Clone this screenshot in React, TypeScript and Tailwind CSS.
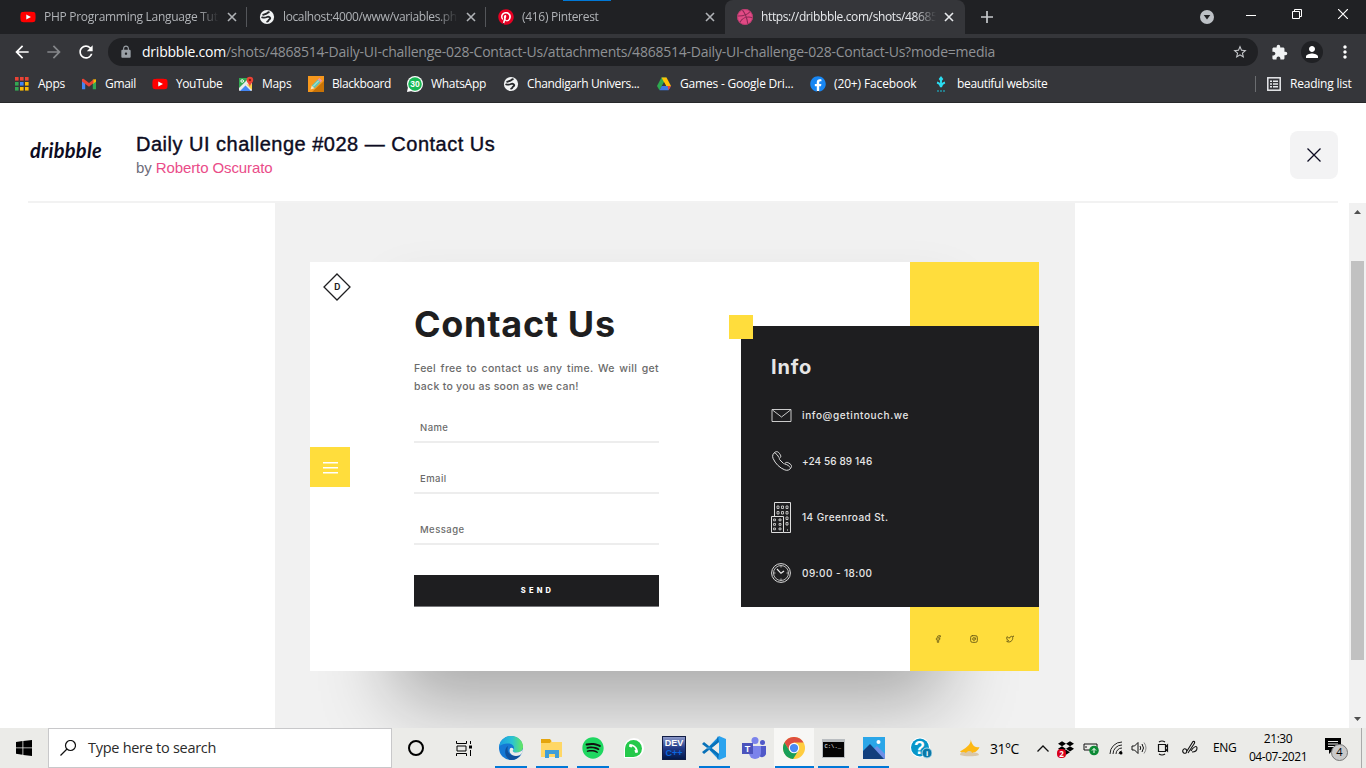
import React from "react";
import type { ReactNode } from "react";
import { Facebook, Instagram, Twitter } from "lucide-react";
import { FaPinterest, FaYoutube, FaPhoneAlt, FaSpotify, FaDropbox, FaFacebook } from "react-icons/fa";
import { MdArrowBack, MdArrowForward, MdExtension, MdLock, MdPerson, MdRefresh, MdStarBorder, MdMoreVert } from "react-icons/md";

const YouTube = () => (
  <span className="relative flex">
    <FaYoutube className="h-[18px] w-4 text-[#f00]" />
    <svg viewBox="0 0 6 6" className="absolute left-[6px] top-[6px] h-[6px] w-[5px]"><path d="M0.3 0L6 3 0.3 6z" fill="#fff" /></svg>
  </span>
);

const Globe = () => (
  <svg viewBox="0 0 16 16" className="h-4 w-4">
    <circle cx="8" cy="8" r="7.1" fill="#f1f3f4" />
    <path d="M9.800 3.200C8.500 3.200 8.600 4.600 7.200 4.700 5.800 4.800 5.500 5.800 4.200 5.800M3.200 8.400c2 .5 3.800.1 4.800-.4 1.300-.6 2.900-.1 3.200.9.300 1.100-1.200 1.200-1.500 2.200-.2.800-.6 1.400-1.500 1.500" fill="none" stroke="#26282b" strokeWidth="1.900" strokeLinecap="round" />
  </svg>
);

const DribbbleBall = () => (
  <svg viewBox="0 0 16 16" className="h-4 w-4">
    <circle cx="8" cy="8" r="7.900" fill="#e24a85" />
    <path d="M5.300.800C8 4 10 8.500 10.800 15M.500 7c5 .2 9.500-.8 12.700-4.500M2.800 13.500C5 9 10 7.200 15.500 8.700" fill="none" stroke="#8a2a55" strokeWidth="1.100" />
    <circle cx="8" cy="8" r="7.500" fill="none" stroke="#b23a6c" strokeWidth=".8" />
  </svg>
);

const AppsGrid = () => (
  <svg viewBox="0 0 14 14" className="h-[14px] w-[14px]">
    {["#ea4335", "#ea4335", "#ea4335", "#34a853", "#4285f4", "#fbbc04", "#34a853", "#fbbc04", "#fbbc04"].map((c, i) => (
      <rect key={i} x={(i % 3) * 5} y={Math.floor(i / 3) * 5} width="3.600" height="3.600" fill={c} />
    ))}
  </svg>
);

const Gmail = () => (
  <svg viewBox="0 0 16 16" className="h-4 w-4">
    <path d="M1 4.500v8.800h3.200V7z" fill="#4285f4" />
    <path d="M15 4.500v8.800h-3.200V7z" fill="#34a853" />
    <path d="M11.800 3.600L15 3.200v2.600L11.800 8z" fill="#fbbc04" />
    <path d="M1 3l1.500-.3L8 7l4.500-3.600V7L8 10.800 1 5.600z" fill="#ea4335" />
  </svg>
);

const Maps = () => (
  <svg viewBox="0 0 16 16" className="h-4 w-4">
    <rect x="1" y="2" width="13" height="13" rx="1" fill="#e8eaed" />
    <path d="M1 2h10L1 12z" fill="#34a853" />
    <path d="M2 15l5.500-5.500L13 15z" fill="#4285f4" />
    <path d="M8.500 8.500L14 14V8z" fill="#fbd04a" />
    <circle cx="4.200" cy="5" r="1.300" fill="none" stroke="#fff" />
    <path d="M8.600 4a3.300 3.300 0 016.600 0c0 2.500-2.700 3.500-3.300 7-.6-3.500-3.300-4.500-3.300-7z" fill="#ea4335" />
    <circle cx="11.900" cy="4" r="1.200" fill="#8c1a12" />
  </svg>
);

const Pencil = () => (
  <svg viewBox="0 0 16 16" className="h-4 w-4">
    <rect width="16" height="16" fill="#f7981d" />
    <path d="M16 5v11H4z" fill="#c97306" />
    <path d="M2.500 13.500l1.300-4 2.800 2.800z" fill="#f6e7bd" />
    <path d="M3.800 9.500l6-6 2.800 2.800-6 6z" fill="#63c5b5" />
    <path d="M5 10.500l6-6" stroke="#c8f0df" strokeWidth="1" />
    <path d="M9.800 3.500l1.600-1.600 2.800 2.800-1.600 1.600z" fill="#e995a7" />
  </svg>
);

const WhatsThirty = () => (
  <svg viewBox="0 0 16 16" className="h-4 w-4">
    <circle cx="8" cy="8" r="8" fill="#fff" />
    <path d="M0 16l1-5 4 4z" fill="#fff" />
    <circle cx="8" cy="8" r="6.800" fill="#19b955" />
    <text x="8" y="11" textAnchor="middle" fontSize="8.500" fontWeight="700" fontFamily="Liberation Sans, sans-serif" fill="#fff">30</text>
  </svg>
);

const Drive = () => (
  <svg viewBox="0 0 16 16" className="h-4 w-4">
    <path d="M5.500 1.500h5L8 6.500 3.500 14.300 1 10z" fill="#2da94f" />
    <path d="M5.500 1.500h5L15 10h-5z" fill="#ffc107" />
    <path d="M3.500 14.300L5.800 10H15l-2.500 4.300z" fill="#3b78e7" />
    <path d="M11.500 10H15l-2.500 4.300z" fill="#e8453c" />
    <path d="M8 6.200L10.200 10H5.800z" fill="#35363a" />
  </svg>
);

const FacebookRound = () => (
  <span className="flex h-4 w-4 rounded-full bg-[radial-gradient(#fff_58%,transparent_62%)]"><FaFacebook className="h-4 w-4 text-[#1886f2]" /></span>
);

const Arrow = () => (
  <svg viewBox="0 0 16 16" className="h-4 w-4">
    <path d="M8 0l2.300 3L8 6 5.700 3z" fill="#2bdcf0" />
    <path d="M8 3v7M4 6.500c2 .5 3.500 2 4 4.500.5-2.500 2-4 4-4.500" stroke="#2bdcf0" strokeWidth="1.900" fill="none" />
    <path d="M4 15h2M7 15h2M10 15h2" stroke="#2395a5" strokeWidth="1.500" />
  </svg>
);

const Cross = ({ className }: { className: string }) => (
  <svg viewBox="0 0 10 10" className={className}><path d="M1 1l8 8M9 1L1 9" stroke="currentColor" strokeWidth="1.600" /></svg>
);

const Tab = ({ icon, title, text, active, divider }: { icon: ReactNode; title: string; text: string; active?: boolean; divider?: boolean }) => (
  <div className={`flex h-[34px] shrink-0 items-center ${active ? "w-[240px] rounded-t-lg bg-[#35363a] text-[#e8eaed]" : "w-[239px] text-[#b0b3b7]"}`}>
    <span className="ml-3 flex w-4 shrink-0 justify-center">{icon}</span>
    <span className="ml-2 w-[175px] whitespace-nowrap [mask-image:linear-gradient(to_right,#000_88%,transparent)]">
      <span className={text}>{title}</span>
    </span>
    <Cross className="ml-2 h-[10px] w-[10px] shrink-0" />
    {divider && <span className="ml-auto h-5 w-px bg-[#54565a]" />}
  </div>
);

const marks: { icon: ReactNode; label: string; box: string; text: string }[] = [
  { icon: <AppsGrid />, label: "Apps", box: "w-[67px]", text: "tracking-[-0.25px]" },
  { icon: <Gmail />, label: "Gmail", box: "w-[71px]", text: "tracking-[-0.3px]" },
  { icon: <YouTube />, label: "YouTube", box: "w-[86px]", text: "tracking-[-0.45px]" },
  { icon: <Maps />, label: "Maps", box: "w-[70px]", text: "tracking-[-0.3px]" },
  { icon: <Pencil />, label: "Blackboard", box: "w-[99px]", text: "tracking-[-0.4px]" },
  { icon: <WhatsThirty />, label: "WhatsApp", box: "w-[96px]", text: "tracking-[-0.3px]" },
  { icon: <Globe />, label: "Chandigarh Univers...", box: "w-[153px]", text: "tracking-[-0.36px]" },
  { icon: <Drive />, label: "Games - Google Dri...", box: "w-[154px]", text: "tracking-[-0.2px]" },
  { icon: <FacebookRound />, label: "(20+) Facebook", box: "w-[123px]", text: "tracking-[-0.13px]" },
  { icon: <Arrow />, label: "beautiful website", box: "w-[130px]", text: "tracking-[-0.34px]" },
];

const Browser = () => (
  <header className="h-[103px] w-full border-b border-[#27282a] bg-[#35363a] text-[12px] text-white">
    <div className="relative flex h-[34px] items-center bg-[#202124] pl-2">
      <span className="absolute left-[563px] top-0 h-px w-12 bg-[#0078d7]" />
      <Tab icon={<YouTube />} title="PHP Programming Language Tut" text="tracking-[-0.28px]" divider />
      <Tab icon={<Globe />} title="localhost:4000/www/variables.ph" text="tracking-[-0.38px]" divider />
      <Tab icon={<span className="flex rounded-full bg-[radial-gradient(#fff_58%,transparent_62%)]"><FaPinterest className="h-4 w-4 text-[#e60023]" /></span>} title="(416) Pinterest" text="tracking-[-0.3px]" />
      <Tab icon={<DribbbleBall />} title="https://dribbble.com/shots/48685" text="tracking-[-0.38px]" active />
      <svg viewBox="0 0 12 12" className="ml-4 h-3 w-3"><path d="M6 0v12M0 6h12" stroke="#c6c9cc" strokeWidth="1.700" /></svg>
      <div className="ml-auto flex items-center">
        <svg viewBox="0 0 14 14" className="mr-8 h-[14px] w-[14px]"><circle cx="7" cy="7" r="7" fill="#bdc1c6" /><path d="M3.700 5h6.600L7 9.500z" fill="#202124" /></svg>
        <span className="mb-1 mr-9 h-px w-[10px] bg-white" />
        <svg viewBox="0 0 10 10" className="mb-[6px] mr-9 h-[10px] w-[10px]"><path d="M.5 2.500h7v7h-7zM2.500 2.500v-2h7v7h-2" fill="none" stroke="#fff" /></svg>
        <svg viewBox="0 0 10 10" className="mb-[6px] mr-[18px] h-[10px] w-[10px]"><path d="M0 0l10 10M10 0L0 10" stroke="#fff" strokeWidth="1.200" /></svg>
      </div>
    </div>
    <div className="flex h-9 items-center">
      <MdArrowBack className="ml-[12px] h-5 w-5" />
      <MdArrowForward className="ml-3 h-5 w-5 text-[#85878a]" />
      <MdRefresh className="ml-3 h-5 w-5" />
      <div className="ml-3 flex h-7 w-[1150px] items-center rounded-full bg-[#202124]">
        <MdLock className="ml-[11px] h-[14px] w-[14px] text-[#9aa0a6]" />
        <span className="ml-[9px] whitespace-nowrap text-[14px] leading-7 tracking-[-0.23px] text-[#8f9195]"><span className="text-white">dribbble.com</span>/shots/4868514-Daily-UI-challenge-028-Contact-Us/attachments/4868514-Daily-UI-challenge-028-Contact-Us?mode=media</span>
        <MdStarBorder className="ml-auto mr-[10px] h-4 w-4 text-[#c8cacd]" />
      </div>
      <MdExtension className="ml-[13px] h-[17px] w-[17px] text-[#f1f3f4]" />
      <span className="ml-[13px] flex h-[22px] w-[22px] items-center justify-center rounded-full bg-[#202124]"><MdPerson className="h-[18px] w-[18px]" /></span>
      <MdMoreVert className="ml-[12px] h-5 w-5" />
    </div>
    <div className="flex h-[28px] items-center pl-[14px]">
      {marks.map((m) => (
        <div key={m.label} className={`flex shrink-0 items-center ${m.box}`}>
          <span className="flex w-4 shrink-0 justify-center">{m.icon}</span>
          <span className={`ml-2 whitespace-nowrap ${m.text}`}>{m.label}</span>
        </div>
      ))}
      <span className="ml-[192px] h-4 w-px bg-[#6b6d70]" />
      <svg viewBox="0 0 14 14" className="ml-[11px] h-[14px] w-[14px]"><rect x=".8" y=".8" width="12.400" height="12.400" fill="none" stroke="#e8eaed" strokeWidth="1.500" /><path d="M3 4.200h2M6 4.200h5M3 7h2M6 7h5M3 9.800h2M6 9.800h5" stroke="#e8eaed" strokeWidth="1.500" /></svg>
      <span className="ml-[9px] whitespace-nowrap tracking-[-0.22px]">Reading list</span>
    </div>
  </header>
);

const Field = ({ label, space }: { label: string; space: string }) => (
  <div className={`h-[28px] border-b-2 border-[#ededed] pl-[6px] text-[9.5px] font-medium leading-[26px] tracking-[0.45px] text-[#6b6b6b] ${space}`}>{label}</div>
);

const Envelope = () => (
  <svg viewBox="0 0 20 13" className="h-[13px] w-[21px]"><path d="M.5.5h19v12H.5zM1 1l9 7 9-7" fill="none" stroke="#dedede" strokeWidth=".9" /></svg>
);
const Handset = () => (
  <svg viewBox="0 0 20 20" className="h-5 w-5 translate-x-px"><path d="M3.300 1C5 .2 6.200.8 7.300 2.300l1 1.500c.9 1.500.5 2.500-.6 3.300-.7.6-.5 1 .1 1.700l3.600 3.600c.6.6 1 .7 1.600 0 .8-1 2-1.400 3.300-.6l1.700 1.100c1.500 1 1.900 2.300 1.100 3.700-1.300 2.400-3.700 3.300-6.300 2.300C7.800 17 3.300 12.600 1 7.300 0 4.600 1 2.400 3.300 1zM2.700 2.200c1.300-.2 3.300 2.400 4.300 4.500M13 13c2.500.8 4.400 2 5.200 3.600" fill="none" stroke="#dedede" strokeWidth="1" /></svg>
);
const Building = () => (
  <svg viewBox="0 0 20 31" className="h-[31px] w-5">
    <path d="M.5 14.500h12v16H.5zM3.500 14.500V.5h16v30h-7" fill="none" stroke="#dedede" />
    <path d="M6 4h2v2.500H6zM10.500 4h2v2.500h-2zM15 4h2v2.500h-2zM6 9.500h2v2.500H6zM10.500 9.500h2v2.500h-2zM15 9.500h2v2.500h-2zM15 15h2v2.500h-2zM15 20.500h2V23h-2zM2.500 17h2v1.800h-2zM8 17h2v1.800H8zM2.500 21.500h2v1.800h-2zM8 21.500h2v1.800H8zM2.500 26h2v1.800h-2zM8 26h2v1.800H8z" fill="none" stroke="#dedede" strokeWidth=".8" />
    <path d="M16.500 27v2" stroke="#888" />
  </svg>
);
const Clock = () => (
  <svg viewBox="0 0 20 20" className="h-5 w-5"><circle cx="10" cy="10" r="9.400" fill="none" stroke="#dedede" /><circle cx="10" cy="10" r="7.500" fill="none" stroke="#dedede" strokeWidth=".8" /><path d="M10 2.500v2M10 15.500v2M2.500 10h2M15.500 10h2" stroke="#dedede" strokeWidth=".8" /><path d="M6 6l4 4.300L13 8" fill="none" stroke="#eee" strokeWidth="1.200" /></svg>
);

const InfoRow = ({ icon, label, space, text }: { icon: ReactNode; label: string; space: string; text: string }) => (
  <div className={`flex h-10 items-center ${space}`}>
    <span className="flex w-[21px] shrink-0">{icon}</span>
    <span className={`ml-[10px] whitespace-nowrap text-[10px] font-medium text-[#e6e6e6] ${text}`}>{label}</span>
  </div>
);

const Shot = () => (
  <div className="flex h-[409px] w-[729px] bg-white font-['Inter',sans-serif] text-[#1e1e20] shadow-[-6px_122px_70px_-90px_rgba(0,0,0,0.3),0_-60px_50px_-82px_rgba(0,0,0,0.09)]">
    <div className="w-[104px] shrink-0 pt-[11px]">
      <svg viewBox="0 0 28 28" className="ml-[13px] h-7 w-7">
        <path d="M14 1l13 13-13 13L1 14z" fill="none" stroke="#1e1e20" strokeWidth="1.300" />
        <text x="14.400" y="17" textAnchor="middle" fontSize="8.500" fontWeight="700" fontFamily="Inter, sans-serif" fill="#1e1e20">D</text>
      </svg>
      <div className="mt-[146px] flex h-10 w-10 items-center justify-center bg-[#ffdd3c]">
        <svg viewBox="0 0 15 13" className="h-[13px] w-[15px]"><path d="M0 1.700h15M0 6.700h15M0 11.700h15" stroke="#fff" strokeWidth="1.400" /></svg>
      </div>
    </div>
    <div className="w-[245px] shrink-0 pt-[41px]">
      <h1 className="h-[43px] whitespace-nowrap text-[36px] font-bold leading-[43px] tracking-[0.7px]">Contact Us</h1>
      <div className="mt-[14px] whitespace-nowrap text-[10.5px] font-medium leading-[18px] text-[#6b6b6b]">
        <p className="tracking-[0.32px] [word-spacing:1.4px]">Feel free to contact us any time. We will get</p>
        <p className="tracking-[0.27px]">back to you as soon as we can!</p>
      </div>
      <Field label="Name" space="mt-[19px]" />
      <Field label="Email" space="mt-[23px]" />
      <Field label="Message" space="mt-[23px]" />
      <button className="mt-[30px] block h-[32px] w-full border-b border-[#77777a] bg-[#1e1e20] pl-[2px] pt-px text-center text-[7.5px] font-extrabold tracking-[3.2px] text-white">SEND</button>
    </div>
    <div className="ml-[82px] flex w-[298px] flex-col items-end">
      <div className="h-16 w-[129px] bg-[#ffdd3c]" />
      <section className="relative h-[281px] w-full bg-[#1e1e20] pl-[30px] pt-[31px]">
        <span className="absolute -left-3 -top-[11px] h-6 w-6 bg-[#ffdd3c]" />
        <h2 className="text-[20px] font-bold leading-5 tracking-[0.8px] text-[#e6e6e6]">Info</h2>
        <InfoRow icon={<Envelope />} label="info@getintouch.we" space="mt-[18px]" text="tracking-[0.61px]" />
        <InfoRow icon={<Handset />} label="+24 56 89 146" space="mt-[6px]" text="tracking-[0.1px]" />
        <InfoRow icon={<Building />} label="14 Greenroad St." space="mt-4" text="tracking-[0.43px]" />
        <InfoRow icon={<Clock />} label="09:00 - 18:00" space="mt-4" text="tracking-[0.42px]" />
      </section>
      <div className="flex h-16 w-[129px] items-center justify-between bg-[#ffdd3c] pl-6 pr-[25px] text-[#6c5d17]">
        <Facebook className="h-2 w-2" strokeWidth={2.500} /><Instagram className="h-2 w-2" strokeWidth={2.800} /><Twitter className="h-2 w-2" strokeWidth={2.800} />
      </div>
    </div>
  </div>
);

const Page = () => (
  <main className="flex h-[625px] flex-col bg-white">
    <div className="mx-7 flex h-[100px] shrink-0 border-b-2 border-[#f2f2f2] font-['Liberation_Sans',sans-serif]">
      <div className="w-[108px] shrink-0 pl-[2px] pt-[35px] font-['Lato',sans-serif] text-[20px] font-bold italic leading-6 tracking-[0.3px] text-[#0d0c22]">dribbble</div>
      <div className="pt-[28px]">
        <h1 className="whitespace-nowrap text-[20px] leading-[26px] tracking-[0.5px] text-[#0d0c22] [-webkit-text-stroke:0.4px_#0d0c22]">Daily UI challenge #028 — Contact Us</h1>
        <p className="text-[15px] leading-[22px] tracking-[-0.1px] text-[#6e6d7a]">by <span className="text-[#ea4c89]">Roberto Oscurato</span></p>
      </div>
      <button className="ml-auto mt-7 flex h-12 w-12 items-center justify-center rounded-lg bg-[#f3f3f4]">
        <svg viewBox="0 0 14 14" className="h-[14px] w-[14px]"><path d="M.5.5l13 13M13.500.5l-13 13" stroke="#0d0c22" strokeWidth="1.300" /></svg>
      </button>
    </div>
    <div className="flex h-[525px]">
      <div className="ml-[275px] w-[800px] shrink-0 overflow-hidden bg-[#f1f1f1] pl-[35px] pt-[59px]"><Shot /></div>
      <div className="ml-auto flex w-[17px] flex-col items-center bg-[#f1f1f1] pt-[7px]">
        <svg viewBox="0 0 7 4" className="h-1 w-[7px]"><path d="M0 4l3.500-4L7 4z" fill="#505050" /></svg>
        <span className="mt-[47px] h-[399px] w-[13px] bg-[#c1c1c1]" />
        <svg viewBox="0 0 7 4" className="mt-[57px] h-1 w-[7px]"><path d="M0 0l3.500 4L7 0z" fill="#505050" /></svg>
      </div>
    </div>
  </main>
);

const Edge = () => (
  <svg viewBox="0 0 24 24" className="h-6 w-6">
    <defs><linearGradient id="eg" x1="0" x2="1"><stop offset="0" stopColor="#1b9de2" /><stop offset=".55" stopColor="#2bc3d2" /><stop offset="1" stopColor="#66e85c" /></linearGradient></defs>
    <circle cx="12" cy="12" r="12" fill="#1578d4" />
    <path d="M0 11C1 4 6 0 12 0c7 0 12 5 12 10.500 0 4-3 6-7 6-3 0-4-1.500-2.500-3 1.800-2.200-1-6-5-6C5 7.500 1 9 0 11z" fill="url(#eg)" />
    <path d="M9 10c-2 6 2 11 11 9.200l2-1C20 22 16.500 24 12 24 6 23 4 13 9 10z" fill="#10519d" />
    <path d="M14.500 13.500c-1.500 1.500-.5 3 2.500 3 3.500 0 6-1.200 7-3.500l-.5 3.500c-1.500 2.500-4 3.500-6.500 3.500-5 0-7.500-4-6-7.500.8-1.500 3.500-.8 3.500 1z" fill="#ecedea" />
  </svg>
);
const Folder = () => (
  <svg viewBox="0 0 22 19" className="h-[19px] w-[22px]"><path d="M0 1h9l2 2h10v15H0z" fill="#ffd765" /><path d="M0 0h9l1.500 2L9 4H0z" fill="#e5a50d" /><path d="M4 19v-8h14v8h-4v-4H8v4z" fill="#3f9ed8" /></svg>
);
const Spotify = () => <span className="flex rounded-full bg-[radial-gradient(#111_58%,transparent_62%)]"><FaSpotify className="h-[22px] w-[22px] text-[#1ed760]" /></span>;
const WhatsAppIcon = () => (
  <span className="flex h-5 w-5 items-center justify-center rounded-full rounded-bl-sm bg-white"><span className="flex h-[17px] w-[17px] items-center justify-center rounded-full rounded-bl-sm bg-[#25c94b]"><FaPhoneAlt className="h-[9px] w-[9px] rotate-90 -scale-x-100 rotate-[270deg] text-white" /></span></span>
);
const DevCpp = () => (
  <span className="flex h-6 w-6 flex-col items-center overflow-hidden border border-[#101c44] bg-linear-to-b from-[#8c98c8] via-[#233a87] to-[#03194b] pt-px font-['Liberation_Sans',sans-serif] text-[9px] font-bold leading-[10px]">
    <span className="text-white">DEV</span><span className="text-[#0b68e0]">C++</span>
  </span>
);
const Code = () => (
  <svg viewBox="0 0 24 24" className="h-6 w-6"><path d="M17 0v24l7-3V3z" fill="#2ba3ee" /><path d="M17 0L5.500 12 17 24v-6L9.500 12 17 6z" fill="#1b8ddb" /><path d="M2 6L0 8l15 11.500V24l2-6zM2 18l-2-2L15 4.500V0l2 6z" fill="#0871b8" /></svg>
);
const Teams = () => (
  <svg viewBox="0 0 24 22" className="h-[22px] w-6"><circle cx="20.500" cy="5.500" r="2.500" fill="#5059c9" /><circle cx="13" cy="3.500" r="3.500" fill="#7b83eb" /><path d="M16 9h8v6a4 4 0 01-8 2z" fill="#5059c9" /><path d="M7 9h12v7a6 6 0 01-12 0z" fill="#7b83eb" /><path d="M0 6h11v11H0z" fill="#4b53bc" /><text x="5.500" y="14.500" textAnchor="middle" fontSize="9" fontWeight="700" fontFamily="Liberation Sans, sans-serif" fill="#fff">T</text></svg>
);
const Chrome = () => (
  <svg viewBox="0 0 24 24" className="h-[22px] w-[22px]"><circle cx="12" cy="12" r="12" fill="#ffcd40" /><path d="M1.600 6A12 12 0 0122.400 6H12L7 15z" fill="#de4f41" /><path d="M1.600 6A12 12 0 0011 24l6-9.500-5 2.500-5-2z" fill="#199f59" /><circle cx="12" cy="12" r="5.700" fill="#fff" /><circle cx="12" cy="12" r="4.500" fill="#4a8af4" /></svg>
);
const Terminal = () => (
  <svg viewBox="0 0 23 19" className="h-[19px] w-[23px]"><rect width="23" height="19" fill="#b9bdc0" /><rect x="1" y="3" width="21" height="15" fill="#050505" /><text x="2.500" y="9" fontSize="5.500" fontFamily="Liberation Mono, monospace" fill="#fff">C:\._</text></svg>
);
const Photos = () => (
  <svg viewBox="0 0 22 22" className="h-[22px] w-[22px]"><rect width="22" height="22" fill="#2aa6e8" /><path d="M8 14l6-5 8 8v5H0z" fill="#6f8fe6" /><path d="M0 14l7-7 14 15H0z" fill="#123f7d" /><circle cx="15.500" cy="5" r="2" fill="#fff" /></svg>
);
const Help = () => (
  <svg viewBox="0 0 22 22" className="h-[22px] w-[22px]"><circle cx="10" cy="10.500" r="10" fill="#fff" /><circle cx="10" cy="10.500" r="9" fill="#0796c9" /><text x="9.500" y="17" textAnchor="middle" fontSize="18" fontWeight="700" fontFamily="Liberation Sans, sans-serif" fill="#fff">?</text><circle cx="17" cy="16" r="5" fill="#0b78a8" stroke="#a9d7e8" /><text x="17" y="19" textAnchor="middle" fontSize="8" fontWeight="700" fontFamily="Liberation Sans, sans-serif" fill="#fff">i</text></svg>
);

const tasks: { icon: ReactNode; box: string; bar?: string }[] = [
  { icon: <Edge />, box: "w-[41px]", bar: "w-8" },
  { icon: <Folder />, box: "w-[41px]", bar: "w-8" },
  { icon: <Spotify />, box: "w-[41px]", bar: "w-8" },
  { icon: <WhatsAppIcon />, box: "w-[41px]" },
  { icon: <DevCpp />, box: "w-10" },
  { icon: <Code />, box: "w-10", bar: "w-[31px]" },
  { icon: <Teams />, box: "w-10" },
  { icon: <Chrome />, box: "w-10 bg-[#f7f7f5]", bar: "w-[39px]" },
  { icon: <Terminal />, box: "w-[39px]", bar: "w-[31px]" },
  { icon: <Photos />, box: "w-[41px]", bar: "w-[31px]" },
];

const Slot = ({ w, children }: { w: string; children: ReactNode }) => <span className={`flex shrink-0 justify-center ${w}`}>{children}</span>;

const Taskbar = () => (
  <footer className="flex h-10 items-center bg-[#ebebe8] text-[12px] text-black">
    <Slot w="w-12"><svg viewBox="0 0 16 16" className="h-4 w-4"><path d="M0 2l6.500-.9v6.400H0zM7.300 1L16 0v7.500H7.300zM0 8.300h6.500v6.400L0 13.800zM7.300 8.300H16V16l-8.700-1.100z" /></svg></Slot>
    <div className="flex h-10 w-[344px] items-center border border-[#c8c8ca] bg-white pl-[11px]">
      <svg viewBox="0 0 16 16" className="h-4 w-4"><circle cx="10.500" cy="5.500" r="5" fill="none" stroke="#111" strokeWidth="1.200" /><path d="M7 9L.5 15.500" stroke="#111" strokeWidth="1.200" /></svg>
      <span className="ml-3 whitespace-nowrap text-[14.5px] tracking-[-0.28px] text-[#2b2b2b]">Type here to search</span>
    </div>
    <Slot w="w-12"><span className="h-4 w-4 rounded-full border-2 border-black" /></Slot>
    <Slot w="w-[50px]"><svg viewBox="0 0 16 15" className="mr-[2px] h-[15px] w-4"><path d="M.5 0v2.500h10V0M.5 15v-2.500h10V15M1 5h9v5H1zM14.500 0v3M14.500 9v6" fill="none" stroke="#000" /><path d="M13 4.500h3v3h-3z" /></svg></Slot>
    {tasks.map((t, i) => (
      <div key={i} className={`flex h-10 shrink-0 flex-col items-center ${t.box}`}>
        <span className="flex h-[38px] items-center pt-[2px]">{t.icon}</span>
        {t.bar && <span className={`h-[2px] bg-[#0078d7] ${t.bar}`} />}
      </div>
    ))}
    <span className="ml-[7px] flex w-10 justify-center"><Help /></span>
    <svg viewBox="0 0 22 20" className="ml-[18px] h-5 w-[22px]"><path d="M11.500 0c1.500 5-2.500 9-10.500 13.500 4 3.500 17 3.500 19.500-4.500C15 10.500 12.500 6 11.500 0z" fill="#fdb813" /><path d="M1 17c0-3 4-4 6-2 2-3 6-2 6 0 3-1 7 0 7 2-2 1.500-14 2-19 0z" fill="#d9c7aa" /></svg>
    <span className="ml-[9px] w-[46px] whitespace-nowrap text-[14px] tracking-[-0.5px]">31°C</span>
    <svg viewBox="0 0 12 7" className="ml-px h-[7px] w-3"><path d="M.5 6.500L6 1l5.500 5.500" fill="none" stroke="#111" strokeWidth="1.300" /></svg>
    <span className="relative ml-[9px] flex h-4 w-4"><FaDropbox className="h-4 w-4" /><span className="absolute -left-px bottom-[-2px] flex h-[9px] w-[9px] items-center justify-center rounded-sm bg-[#d9001b] text-[8px] font-bold leading-none text-white">2</span></span>
    <svg viewBox="0 0 16 15" className="ml-[9px] h-[15px] w-4"><path d="M1 3h13v6H1z" fill="none" stroke="#111" /><path d="M3 5v2" stroke="#111" /><circle cx="11" cy="9.500" r="4.800" fill="#0c8a35" /><path d="M11 12V7.500M9 9.500l2-2 2 2" fill="none" stroke="#fff" /></svg>
    <svg viewBox="0 0 14 14" className="ml-[10px] h-[14px] w-[14px]"><path d="M1 13A12 12 0 0113 1M4 13a9 9 0 019-9M7 13a6 6 0 016-6M10 13a3 3 0 013-3" fill="none" stroke="#222" /><circle cx="12" cy="12" r="1.500" /></svg>
    <svg viewBox="0 0 16 14" className="ml-[8px] h-[14px] w-4"><path d="M1 5h2.500L7 1.500v11L3.500 9H1zM9 5q1.500 2 0 4M11 3q3 4 0 8" fill="none" stroke="#111" /><path d="M13 1.500q4 5.500 0 11" fill="none" stroke="#888" /></svg>
    <svg viewBox="0 0 14 16" className="ml-[9px] h-4 w-[14px]"><path d="M2.500 4.500h7v7h-7zM9.500 7l2-2v6l-2-2M3 2q3-2 6 0M3 14q3 2 6 0" fill="none" stroke="#111" strokeWidth="1.200" /></svg>
    <svg viewBox="0 0 17 16" className="ml-[12px] h-4 w-[17px]"><path d="M1 10c2-3 5 0 3 3-2 1-4-1-3-3zm4 1L11 1.500c2-.5 2 1 1 2.500L6 13M9 11c2-4 6-6 6-3s-3 4-5 4" fill="none" stroke="#111" strokeWidth="1.100" /></svg>
    <span className="ml-[14px] w-9 whitespace-nowrap tracking-[-0.3px]">ENG</span>
    <span className="flex w-[58px] flex-col items-center whitespace-nowrap leading-[18px] tracking-[-0.45px]"><span>21:30</span><span>04-07-2021</span></span>
    <span className="relative ml-[18px] flex h-5 w-6">
      <svg viewBox="0 0 16 16" className="h-4 w-4"><path d="M0 0h16v12H8l-4 4v-4H0z" /><path d="M3 3.500h10M3 6h10M3 8.500h6" stroke="#ebebe8" /></svg>
      <span className="absolute left-[6px] top-[6px] flex h-[17px] w-[17px] items-center justify-center rounded-full border border-[#777] bg-[#c9c9c9] text-[11px]">4</span>
    </span>
    <span className="ml-auto mr-1 h-10 w-px bg-[#aaa]" />
  </footer>
);

export default function App() {
  return (
    <div className="h-[768px] w-[1366px] overflow-hidden bg-white font-['Open_Sans','Noto_Sans',sans-serif]">
      <Browser />
      <Page />
      <Taskbar />
    </div>
  );
}
